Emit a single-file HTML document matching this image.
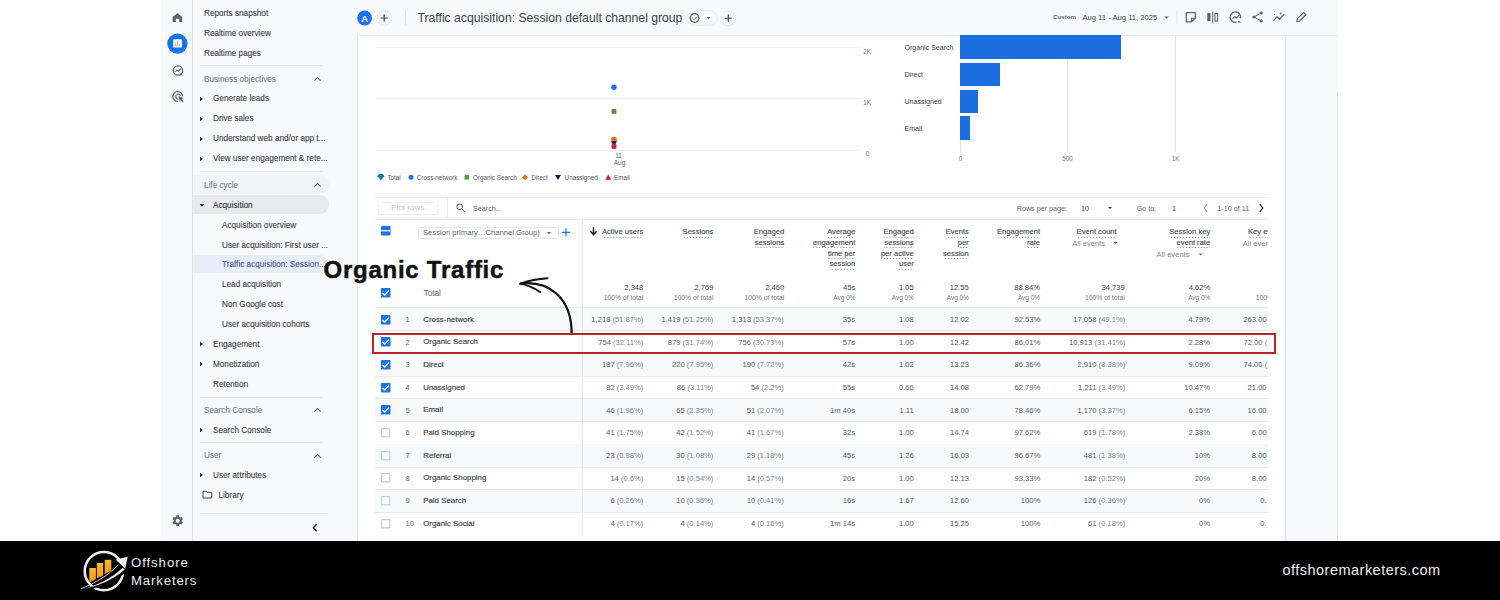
<!DOCTYPE html>
<html><head><meta charset="utf-8">
<style>
*{margin:0;padding:0;box-sizing:border-box}
html,body{width:1500px;height:600px;overflow:hidden;background:#fff;font-family:"Liberation Sans",sans-serif;color:#3c4043}
.t{position:absolute;white-space:nowrap;line-height:1}
.r{position:absolute}
.n{position:absolute;white-space:nowrap;line-height:1;-webkit-text-stroke:0.1px currentColor}
svg{position:absolute;overflow:visible}
</style></head><body>

<div class="r" style="left:161.00px;top:0.00px;width:1177.00px;height:541.00px;background:#f8f9fb"></div>
<div class="r" style="left:192.00px;top:0.00px;width:1.00px;height:541.00px;background:#dfe1e5"></div>
<div class="r" style="left:357.00px;top:35.00px;width:928.50px;height:506.00px;background:#fff;border-left:1px solid #e8e9eb;border-right:1px solid #e6e7e9"></div>
<div class="r" style="left:357.00px;top:34.50px;width:981.00px;height:1.00px;background:#e6e8eb"></div>
<div class="r" style="left:1337.00px;top:92.00px;width:1.00px;height:449.00px;background:#e3e5e8"></div>
<svg style="left:162px;top:0" width="31" height="110" viewBox="0 0 31 110">
<path d="M10.6 22 V17 L15.5 13.2 L20.2 17 V22 H17.2 V18.8 H13.8 V22 Z" fill="#5f6368"/>
<circle cx="15.4" cy="43.6" r="10.2" fill="#1a73e8"/>
<rect x="11.2" y="39.3" width="8.8" height="8.2" fill="#fff" rx="0.6"/>
<path d="M13.3 46 V42.5 M15.5 46 V41 M17.7 46 V43.5" stroke="#8ab4f8" stroke-width="0.9"/>
<circle cx="16" cy="70.5" r="4.6" fill="none" stroke="#5f6368" stroke-width="1.4"/>
<path d="M13.3 72 L15 70 L16.5 71.2 L18.8 68.6" fill="none" stroke="#5f6368" stroke-width="1.1"/>
<path d="M19.5 73.5 L21 75.3 L17.8 75.3 Z" fill="#5f6368"/>
<path d="M20.6 96.6 A4.9 4.9 0 1 0 16.2 101.4" fill="none" stroke="#5f6368" stroke-width="1.3"/>
<path d="M18.4 95.8 A2.4 2.4 0 1 0 15.9 99" fill="none" stroke="#5f6368" stroke-width="1.2"/>
<path d="M16.4 95.9 L21.8 98.2 L19.6 99 L21.8 101.4 L20.8 102.2 L18.7 99.9 L17.9 102 Z" fill="#5f6368"/>
</svg>
<svg style="left:171.3px;top:513.6px" width="13.4" height="13.4" viewBox="0 0 24 24"><path fill="#5f6368" d="M19.14 12.94c.04-.3.06-.61.06-.94 0-.32-.02-.64-.07-.94l2.03-1.58a.49.49 0 0 0 .12-.61l-1.92-3.32a.488.488 0 0 0-.59-.22l-2.39.96c-.5-.38-1.03-.7-1.62-.94l-.36-2.54a.484.484 0 0 0-.48-.41h-3.84c-.24 0-.43.17-.47.41l-.36 2.54c-.59.24-1.13.57-1.62.94l-2.39-.96c-.22-.08-.47 0-.59.22L2.74 8.87c-.12.21-.08.47.12.61l2.03 1.58c-.05.3-.09.63-.09.94s.02.64.07.94l-2.03 1.58a.49.49 0 0 0-.12.61l1.92 3.32c.12.22.37.29.59.22l2.39-.96c.5.38 1.03.7 1.62.94l.36 2.54c.05.24.24.41.48.41h3.84c.24 0 .44-.17.47-.41l.36-2.54c.59-.24 1.13-.56 1.62-.94l2.39.96c.22.08.47 0 .59-.22l1.92-3.32c.12-.22.07-.47-.12-.61l-2.01-1.58zM12 15.6c-1.98 0-3.6-1.62-3.6-3.6s1.62-3.6 3.6-3.6 3.6 1.62 3.6 3.6-1.62 3.6-3.6 3.6z"/></svg>
<div class="n" style="left:204.00px;top:10.16px;font-size:8.2px;color:#3c4043;">Reports snapshot</div>
<div class="n" style="left:204.00px;top:30.16px;font-size:8.2px;color:#3c4043;">Realtime overview</div>
<div class="n" style="left:204.00px;top:50.16px;font-size:8.2px;color:#3c4043;">Realtime pages</div>
<div class="r" style="left:200.00px;top:65.10px;width:123.00px;height:1.00px;background:#e4e6e9"></div>
<div class="n" style="left:204.00px;top:76.16px;font-size:8.2px;color:#777c82;">Business objectives</div>
<svg style="left:313px;top:76px" width="9" height="6" viewBox="0 0 9 6"><path d="M1.3 4.6 L4.5 1.6 L7.7 4.6" fill="none" stroke="#5f6368" stroke-width="1.3"/></svg>
<svg style="left:199px;top:96px" width="5" height="6" viewBox="0 0 5 6"><path d="M1 0.7 L3.8 3 L1 5.3 Z" fill="#202124"/></svg>
<div class="n" style="left:213.00px;top:95.06px;font-size:8.2px;color:#3c4043;">Generate leads</div>
<svg style="left:199px;top:116px" width="5" height="6" viewBox="0 0 5 6"><path d="M1 0.7 L3.8 3 L1 5.3 Z" fill="#202124"/></svg>
<div class="n" style="left:213.00px;top:115.06px;font-size:8.2px;color:#3c4043;">Drive sales</div>
<svg style="left:199px;top:136px" width="5" height="6" viewBox="0 0 5 6"><path d="M1 0.7 L3.8 3 L1 5.3 Z" fill="#202124"/></svg>
<div class="n" style="left:213.00px;top:135.06px;font-size:8.2px;color:#3c4043;">Understand web and/or app t...</div>
<svg style="left:199px;top:156px" width="5" height="6" viewBox="0 0 5 6"><path d="M1 0.7 L3.8 3 L1 5.3 Z" fill="#202124"/></svg>
<div class="n" style="left:213.00px;top:155.06px;font-size:8.2px;color:#3c4043;">View user engagement &amp; rete...</div>
<div class="r" style="left:200.00px;top:171.20px;width:123.00px;height:1.00px;background:#e4e6e9"></div>
<div class="r" style="left:193.00px;top:174.60px;width:136.00px;height:19.60px;background:#f2f3f5;border-radius:0 10px 10px 0"></div>
<div class="n" style="left:204.00px;top:182.16px;font-size:8.2px;color:#777c82;">Life cycle</div>
<svg style="left:313px;top:182px" width="9" height="6" viewBox="0 0 9 6"><path d="M1.3 4.6 L4.5 1.6 L7.7 4.6" fill="none" stroke="#5f6368" stroke-width="1.3"/></svg>
<div class="r" style="left:193.00px;top:195.40px;width:136.00px;height:18.30px;background:#e8eaed;border-radius:0 9px 9px 0"></div>
<svg style="left:198.5px;top:202.5px" width="6" height="5" viewBox="0 0 6 5"><path d="M0.7 1 L3 3.8 L5.3 1 Z" fill="#202124"/></svg>
<div class="n" style="left:213.00px;top:201.66px;font-size:8.2px;color:#303438;">Acquisition</div>
<div class="n" style="left:222.00px;top:221.66px;font-size:8.2px;color:#3c4043;">Acquisition overview</div>
<div class="n" style="left:222.00px;top:241.66px;font-size:8.2px;color:#3c4043;">User acquisition: First user ...</div>
<div class="r" style="left:193.00px;top:255.20px;width:135.00px;height:17.60px;background:#e7edf9;border-radius:0 9px 9px 0"></div>
<div class="n" style="left:222.00px;top:261.16px;font-size:8.2px;color:#41599a;">Traffic acquisition: Session...</div>
<div class="n" style="left:222.00px;top:281.16px;font-size:8.2px;color:#3c4043;">Lead acquisition</div>
<div class="n" style="left:222.00px;top:301.16px;font-size:8.2px;color:#3c4043;">Non Google cost</div>
<div class="n" style="left:222.00px;top:321.16px;font-size:8.2px;color:#3c4043;">User acquisition cohorts</div>
<svg style="left:199px;top:341px" width="5" height="6" viewBox="0 0 5 6"><path d="M1 0.7 L3.8 3 L1 5.3 Z" fill="#202124"/></svg>
<div class="n" style="left:213.00px;top:341.16px;font-size:8.2px;color:#3c4043;">Engagement</div>
<svg style="left:199px;top:361px" width="5" height="6" viewBox="0 0 5 6"><path d="M1 0.7 L3.8 3 L1 5.3 Z" fill="#202124"/></svg>
<div class="n" style="left:213.00px;top:361.16px;font-size:8.2px;color:#3c4043;">Monetization</div>
<div class="n" style="left:213.00px;top:381.16px;font-size:8.2px;color:#3c4043;">Retention</div>
<div class="r" style="left:200.00px;top:396.50px;width:123.00px;height:1.00px;background:#e4e6e9"></div>
<div class="n" style="left:204.00px;top:406.66px;font-size:8.2px;color:#777c82;">Search Console</div>
<svg style="left:313px;top:407px" width="9" height="6" viewBox="0 0 9 6"><path d="M1.3 4.6 L4.5 1.6 L7.7 4.6" fill="none" stroke="#5f6368" stroke-width="1.3"/></svg>
<svg style="left:199px;top:427px" width="5" height="6" viewBox="0 0 5 6"><path d="M1 0.7 L3.8 3 L1 5.3 Z" fill="#202124"/></svg>
<div class="n" style="left:213.00px;top:427.16px;font-size:8.2px;color:#3c4043;">Search Console</div>
<div class="r" style="left:200.00px;top:442.10px;width:123.00px;height:1.00px;background:#e4e6e9"></div>
<div class="n" style="left:204.00px;top:452.16px;font-size:8.2px;color:#777c82;">User</div>
<svg style="left:313px;top:453px" width="9" height="6" viewBox="0 0 9 6"><path d="M1.3 4.6 L4.5 1.6 L7.7 4.6" fill="none" stroke="#5f6368" stroke-width="1.3"/></svg>
<svg style="left:199px;top:472px" width="5" height="6" viewBox="0 0 5 6"><path d="M1 0.7 L3.8 3 L1 5.3 Z" fill="#202124"/></svg>
<div class="n" style="left:213.00px;top:472.16px;font-size:8.2px;color:#3c4043;">User attributes</div>
<svg style="left:202px;top:490px" width="11" height="9" viewBox="0 0 11 9"><path d="M1 1.3 H4.3 L5.3 2.4 H9.7 V8 H1 Z" fill="none" stroke="#3c4043" stroke-width="1"/></svg>
<div class="n" style="left:218.50px;top:491.66px;font-size:8.2px;color:#3c4043;">Library</div>
<div class="r" style="left:200.00px;top:512.50px;width:128.00px;height:1.00px;background:#e4e6e9"></div>
<svg style="left:311px;top:523px" width="8" height="10" viewBox="0 0 8 10"><path d="M5.6 1.3 L2.4 4.8 L5.6 8.3" fill="none" stroke="#202124" stroke-width="1.4"/></svg>
<svg style="left:355px;top:8px" width="380" height="22" viewBox="355 8 380 22">
<circle cx="364.6" cy="18" r="7.4" fill="#1a73e8"/>
<circle cx="384.2" cy="18" r="7.3" fill="none" stroke="#c6c9cc" stroke-width="0.8" stroke-dasharray="1.2 1"/>
<path d="M384.2 14.3 V21.7 M380.5 18 H387.9" stroke="#3c4043" stroke-width="1.1"/>
<rect x="405" y="10" width="0.9" height="15" fill="#dfe1e5"/>
<rect x="687" y="10.6" width="30" height="14.6" rx="7.3" fill="none" stroke="#e6e8eb" stroke-width="0.8"/>
<circle cx="694.6" cy="18" r="4.3" fill="none" stroke="#3f5f48" stroke-width="1.2"/>
<path d="M692.5 18.2 L694.1 19.7 L696.8 16.6" fill="none" stroke="#2f7a3f" stroke-width="1"/>
<path d="M706.6 16.9 L710.8 16.9 L708.7 19.1 Z" fill="#5f6368"/>
<circle cx="728.3" cy="18.3" r="7.3" fill="none" stroke="#c6c9cc" stroke-width="0.8" stroke-dasharray="1.2 1"/>
<path d="M728.3 14.6 V22 M724.6 18.3 H732" stroke="#3c4043" stroke-width="1.1"/>
</svg>
<div class="t" style="left:164.70px;width:400px;text-align:center;top:13.64px;font-size:9.4px;color:#fff;font-weight:700;">A</div>
<div class="t" style="left:417.50px;top:11.87px;font-size:12.2px;color:#3c4043;">Traffic acquisition: Session default channel group</div>
<div class="t" style="left:1053.00px;top:14.25px;font-size:6.2px;color:#5f6368;font-weight:700;">Custom</div>
<div class="t" style="left:1082.40px;top:13.52px;font-size:7.65px;color:#3c4043;">Aug 11 - Aug 11, 2025</div>
<svg style="left:1160px;top:8px" width="160" height="20" viewBox="1160 8 160 20">
<path d="M1164.4 16.6 L1168.6 16.6 L1166.5 18.7 Z" fill="#5f6368"/>
<rect x="1176.5" y="11" width="0.9" height="13" fill="#dfe1e5"/>
<path d="M1186.3 12.6 H1195.3 V18.2 L1191.4 21.9 H1186.3 Z" fill="none" stroke="#5f6368" stroke-width="1.3" stroke-linejoin="round"/>
<path d="M1195.3 18.2 H1191.4 V21.9" fill="none" stroke="#5f6368" stroke-width="1.1"/>
<rect x="1207.3" y="13" width="3.2" height="8.2" fill="#5f6368"/>
<rect x="1212.2" y="11.6" width="1" height="11" fill="#5f6368"/>
<rect x="1214.9" y="13.4" width="2.7" height="7.6" fill="none" stroke="#5f6368" stroke-width="1.1"/>
<path d="M1240.4 18.4 A5.2 5.2 0 1 0 1236.5 22.2" fill="none" stroke="#5f6368" stroke-width="1.4"/>
<path d="M1232.4 18.8 L1234.6 16.6 L1236.4 18 L1238.9 15.3" fill="none" stroke="#5f6368" stroke-width="1.1"/>
<path d="M1238.6 20.6 L1241.5 22.6 L1237.6 22.6 Z" fill="#5f6368"/>
<circle cx="1261.2" cy="13" r="1.6" fill="#5f6368"/>
<circle cx="1253.9" cy="17" r="1.6" fill="#5f6368"/>
<circle cx="1261.2" cy="20.9" r="1.6" fill="#5f6368"/>
<path d="M1261.2 13 L1253.9 17 L1261.2 20.9" fill="none" stroke="#5f6368" stroke-width="1"/>
<path d="M1273.6 20.6 L1277 16.6 L1279.6 19.3 L1284.3 14.4" fill="none" stroke="#5f6368" stroke-width="1.3"/>
<circle cx="1274.6" cy="14.6" r="0.6" fill="#5f6368"/>
<path d="M1280.6 12.2 V14.4 M1279.5 13.3 H1281.7" stroke="#5f6368" stroke-width="0.6"/>
<path d="M1296.8 21.3 L1297.3 18.6 L1303.8 12.6 L1306 14.8 L1299.6 21 Z" fill="none" stroke="#5f6368" stroke-width="1.2" stroke-linejoin="round"/>
</svg>
<div class="r" style="left:376.30px;top:46.80px;width:484.00px;height:1.00px;background:#f0f1f3"></div>
<div class="r" style="left:376.30px;top:98.30px;width:484.00px;height:1.00px;background:#f0f1f3"></div>
<div class="r" style="left:376.30px;top:149.50px;width:484.00px;height:1.00px;background:#f0f1f3"></div>
<div class="t" style="left:667.00px;width:400px;text-align:center;top:49.17px;font-size:6.3px;color:#70757a;">2K</div>
<div class="t" style="left:667.00px;width:400px;text-align:center;top:100.17px;font-size:6.3px;color:#70757a;">1K</div>
<div class="t" style="left:667.50px;width:400px;text-align:center;top:151.17px;font-size:6.3px;color:#70757a;">0</div>
<div class="t" style="left:418.50px;width:400px;text-align:center;top:153.00px;font-size:6.5px;color:#5f6368;">11</div>
<div class="t" style="left:419.50px;width:400px;text-align:center;top:159.50px;font-size:6.5px;color:#5f6368;">Aug</div>
<svg style="left:600px;top:80px" width="30" height="75" viewBox="600 80 30 75">
<circle cx="614" cy="87.3" r="2.7" fill="#1a73e8"/>
<rect x="611.6" y="109" width="4.8" height="4.8" fill="#5a8f3c"/>
<circle cx="614" cy="139.6" r="2.9" fill="#e8710a"/>
<path d="M611 141.2 L617 141.2 L614 146.6 Z" fill="#0d1a6e"/>
<path d="M611.3 148.8 L616.7 148.8 L614 143.4 Z" fill="#d81b9c"/>
<rect x="611.4" y="143.5" width="5.2" height="5" rx="2.2" fill="#c2185b" opacity="0.9"/>
</svg>
<svg style="left:375px;top:170px" width="260" height="14" viewBox="375 170 260 14">
<path d="M377.6 176.3 A3.3 2.6 0 0 1 384.2 176.3 L380.9 180.6 Z" fill="#12829b"/>
<circle cx="411" cy="177.2" r="2.5" fill="#1a73e8"/>
<rect x="464.5" y="175" width="4.5" height="4.5" fill="#5c9a3a"/>
<path d="M525 174.2 L528 177.2 L525 180.2 L522 177.2 Z" fill="#e8710a"/>
<path d="M555 175 L561 175 L558 180 Z" fill="#0d1a6e"/>
<path d="M605.3 179.8 L611.3 179.8 L608.3 174.6 Z" fill="#c2185b"/>
</svg>
<div class="t" style="left:387.40px;top:174.67px;font-size:6.3px;color:#54595e;">Total</div>
<div class="t" style="left:416.80px;top:174.67px;font-size:6.3px;color:#54595e;">Cross-network</div>
<div class="t" style="left:472.90px;top:174.67px;font-size:6.3px;color:#54595e;">Organic Search</div>
<div class="t" style="left:531.30px;top:174.67px;font-size:6.3px;color:#54595e;">Direct</div>
<div class="t" style="left:564.60px;top:174.67px;font-size:6.3px;color:#54595e;">Unassigned</div>
<div class="t" style="left:614.00px;top:174.67px;font-size:6.3px;color:#54595e;">Email</div>
<div class="r" style="left:1067.20px;top:35.00px;width:1.00px;height:117.00px;background:#e3e5e8"></div>
<div class="r" style="left:1175.00px;top:35.00px;width:1.00px;height:117.00px;background:#e3e5e8"></div>
<div class="r" style="left:959.80px;top:140.00px;width:1.00px;height:12.00px;background:#e3e5e8"></div>
<div class="r" style="left:960.00px;top:35.10px;width:161.10px;height:23.60px;background:#1a6ee0"></div>
<div class="r" style="left:960.00px;top:62.70px;width:39.70px;height:23.30px;background:#1a6ee0"></div>
<div class="r" style="left:960.00px;top:89.50px;width:17.60px;height:23.40px;background:#1a6ee0"></div>
<div class="r" style="left:960.00px;top:116.40px;width:9.80px;height:23.30px;background:#1a6ee0"></div>
<div class="t" style="left:904.50px;top:44.03px;font-size:7.05px;color:#3c4043;">Organic Search</div>
<div class="t" style="left:904.50px;top:71.03px;font-size:7.05px;color:#3c4043;">Direct</div>
<div class="t" style="left:904.50px;top:97.83px;font-size:7.05px;color:#3c4043;">Unassigned</div>
<div class="t" style="left:904.50px;top:124.83px;font-size:7.05px;color:#3c4043;">Email</div>
<div class="t" style="left:760.40px;width:400px;text-align:center;top:156.17px;font-size:6.3px;color:#70757a;">0</div>
<div class="t" style="left:867.50px;width:400px;text-align:center;top:156.17px;font-size:6.3px;color:#70757a;">500</div>
<div class="t" style="left:975.50px;width:400px;text-align:center;top:156.17px;font-size:6.3px;color:#70757a;">1K</div>
<div class="r" style="left:374.50px;top:196.60px;width:893.50px;height:1.20px;background:#e8eaed"></div>
<div class="r" style="left:374.50px;top:218.50px;width:893.50px;height:1.00px;background:#e8eaed"></div>
<div class="r" style="left:378.00px;top:202.00px;width:60.00px;height:13.20px;border:1px solid #eceef0;border-radius:3px;background:#fff"></div>
<div class="t" style="left:207.80px;width:400px;text-align:center;top:204.44px;font-size:8.1px;color:#c4c7ca;">Plot rows</div>
<div class="r" style="left:447.00px;top:197.00px;width:1.00px;height:21.50px;background:#e8eaed"></div>
<svg style="left:455px;top:202px" width="12" height="12" viewBox="0 0 24 24"><path fill="#5f6368" d="M15.5 14h-.79l-.28-.27A6.47 6.47 0 0 0 16 9.5 6.5 6.5 0 1 0 9.5 16c1.61 0 3.09-.59 4.23-1.57l.27.28v.79l5 4.99L20.49 19l-4.99-5zm-6 0C7.01 14 5 11.99 5 9.5S7.01 5 9.5 5 14 7.01 14 9.5 11.99 14 9.5 14z"/></svg>
<div class="t" style="left:473.00px;top:204.91px;font-size:7.2px;color:#5f6368;">Search...</div>
<div class="t" style="left:1016.70px;top:204.71px;font-size:7.2px;color:#5f6368;">Rows per page:</div>
<div class="t" style="left:1081.00px;top:204.71px;font-size:7.2px;color:#3c4043;">10</div>
<div class="t" style="left:1136.70px;top:204.71px;font-size:7.2px;color:#5f6368;">Go to:</div>
<div class="t" style="left:1172.00px;top:204.71px;font-size:7.2px;color:#3c4043;">1</div>
<div class="t" style="left:1217.30px;top:204.71px;font-size:7.2px;color:#5f6368;">1-10 of 11</div>
<svg style="left:1100px;top:200px" width="170" height="16" viewBox="1100 200 170 16">
<path d="M1107.9 206.9 L1112.1 206.9 L1110 209.1 Z" fill="#3c4043"/>
<path d="M1207.3 204.2 L1204.3 208 L1207.3 211.8" fill="none" stroke="#9aa0a6" stroke-width="1.1"/>
<path d="M1259.8 204.2 L1262.8 208 L1259.8 211.8" fill="none" stroke="#202124" stroke-width="1.3"/>
</svg>
<svg style="left:380.8px;top:226.3px" width="9.5" height="9.5" viewBox="0 0 18 18"><rect x="0" y="0" width="18" height="18" rx="2" fill="#1a73e8"/><rect x="0" y="7.8" width="18" height="2.4" fill="#fff"/></svg>
<div class="r" style="left:418.40px;top:226.60px;width:140.60px;height:12.80px;border:1px solid #e3e5e8;border-radius:2px"></div>
<div class="t" style="left:423.00px;top:229.12px;font-size:7.65px;color:#5f6368;">Session primary…Channel Group)</div>
<svg style="left:540px;top:226px" width="35" height="14" viewBox="540 226 35 14">
<path d="M546.9 232 L551.1 232 L549 234.2 Z" fill="#5f6368"/>
<path d="M566 228.3 V236.3 M562 232.3 H570" stroke="#1a73e8" stroke-width="1.2"/>
</svg>
<svg style="left:589px;top:226px" width="10" height="11" viewBox="0 0 10 11"><path d="M4.5 1.2 V8 M1.4 5.2 L4.5 8.6 L7.6 5.2" fill="none" stroke="#202124" stroke-width="1.5"/></svg>
<div class="t" style="right:856.70px;top:227.77px;font-size:7.6px;color:#494d52;background-image:linear-gradient(to right,#8d9196 45%,transparent 45%);background-size:3px 1px;background-repeat:repeat-x;background-position:right bottom;padding-bottom:2.2px;line-height:1;-webkit-text-stroke:0.15px currentColor">Active users</div>
<div class="t" style="right:786.60px;top:227.77px;font-size:7.6px;color:#494d52;background-image:linear-gradient(to right,#8d9196 45%,transparent 45%);background-size:3px 1px;background-repeat:repeat-x;background-position:right bottom;padding-bottom:2.2px;line-height:1;-webkit-text-stroke:0.15px currentColor">Sessions</div>
<div class="t" style="right:715.80px;top:227.77px;font-size:7.6px;color:#494d52;background-image:linear-gradient(to right,#8d9196 45%,transparent 45%);background-size:3px 1px;background-repeat:repeat-x;background-position:right bottom;padding-bottom:2.2px;line-height:1;-webkit-text-stroke:0.15px currentColor">Engaged</div>
<div class="t" style="right:715.80px;top:238.67px;font-size:7.6px;color:#494d52;background-image:linear-gradient(to right,#8d9196 45%,transparent 45%);background-size:3px 1px;background-repeat:repeat-x;background-position:right bottom;padding-bottom:2.2px;line-height:1;-webkit-text-stroke:0.15px currentColor">sessions</div>
<div class="t" style="right:644.70px;top:227.77px;font-size:7.6px;color:#494d52;background-image:linear-gradient(to right,#8d9196 45%,transparent 45%);background-size:3px 1px;background-repeat:repeat-x;background-position:right bottom;padding-bottom:2.2px;line-height:1;-webkit-text-stroke:0.15px currentColor">Average</div>
<div class="t" style="right:644.70px;top:238.67px;font-size:7.6px;color:#494d52;background-image:linear-gradient(to right,#8d9196 45%,transparent 45%);background-size:3px 1px;background-repeat:repeat-x;background-position:right bottom;padding-bottom:2.2px;line-height:1;-webkit-text-stroke:0.15px currentColor">engagement</div>
<div class="t" style="right:644.70px;top:249.57px;font-size:7.6px;color:#494d52;background-image:linear-gradient(to right,#8d9196 45%,transparent 45%);background-size:3px 1px;background-repeat:repeat-x;background-position:right bottom;padding-bottom:2.2px;line-height:1;-webkit-text-stroke:0.15px currentColor">time per</div>
<div class="t" style="right:644.70px;top:260.47px;font-size:7.6px;color:#494d52;background-image:linear-gradient(to right,#8d9196 45%,transparent 45%);background-size:3px 1px;background-repeat:repeat-x;background-position:right bottom;padding-bottom:2.2px;line-height:1;-webkit-text-stroke:0.15px currentColor">session</div>
<div class="t" style="right:586.20px;top:227.77px;font-size:7.6px;color:#494d52;background-image:linear-gradient(to right,#8d9196 45%,transparent 45%);background-size:3px 1px;background-repeat:repeat-x;background-position:right bottom;padding-bottom:2.2px;line-height:1;-webkit-text-stroke:0.15px currentColor">Engaged</div>
<div class="t" style="right:586.20px;top:238.67px;font-size:7.6px;color:#494d52;background-image:linear-gradient(to right,#8d9196 45%,transparent 45%);background-size:3px 1px;background-repeat:repeat-x;background-position:right bottom;padding-bottom:2.2px;line-height:1;-webkit-text-stroke:0.15px currentColor">sessions</div>
<div class="t" style="right:586.20px;top:249.57px;font-size:7.6px;color:#494d52;background-image:linear-gradient(to right,#8d9196 45%,transparent 45%);background-size:3px 1px;background-repeat:repeat-x;background-position:right bottom;padding-bottom:2.2px;line-height:1;-webkit-text-stroke:0.15px currentColor">per active</div>
<div class="t" style="right:586.20px;top:260.47px;font-size:7.6px;color:#494d52;background-image:linear-gradient(to right,#8d9196 45%,transparent 45%);background-size:3px 1px;background-repeat:repeat-x;background-position:right bottom;padding-bottom:2.2px;line-height:1;-webkit-text-stroke:0.15px currentColor">user</div>
<div class="t" style="right:531.20px;top:227.77px;font-size:7.6px;color:#494d52;background-image:linear-gradient(to right,#8d9196 45%,transparent 45%);background-size:3px 1px;background-repeat:repeat-x;background-position:right bottom;padding-bottom:2.2px;line-height:1;-webkit-text-stroke:0.15px currentColor">Events</div>
<div class="t" style="right:531.20px;top:238.67px;font-size:7.6px;color:#494d52;background-image:linear-gradient(to right,#8d9196 45%,transparent 45%);background-size:3px 1px;background-repeat:repeat-x;background-position:right bottom;padding-bottom:2.2px;line-height:1;-webkit-text-stroke:0.15px currentColor">per</div>
<div class="t" style="right:531.20px;top:249.57px;font-size:7.6px;color:#494d52;background-image:linear-gradient(to right,#8d9196 45%,transparent 45%);background-size:3px 1px;background-repeat:repeat-x;background-position:right bottom;padding-bottom:2.2px;line-height:1;-webkit-text-stroke:0.15px currentColor">session</div>
<div class="t" style="right:460.00px;top:227.77px;font-size:7.6px;color:#494d52;background-image:linear-gradient(to right,#8d9196 45%,transparent 45%);background-size:3px 1px;background-repeat:repeat-x;background-position:right bottom;padding-bottom:2.2px;line-height:1;-webkit-text-stroke:0.15px currentColor">Engagement</div>
<div class="t" style="right:460.00px;top:238.67px;font-size:7.6px;color:#494d52;background-image:linear-gradient(to right,#8d9196 45%,transparent 45%);background-size:3px 1px;background-repeat:repeat-x;background-position:right bottom;padding-bottom:2.2px;line-height:1;-webkit-text-stroke:0.15px currentColor">rate</div>
<div class="t" style="right:383.30px;top:227.77px;font-size:7.6px;color:#494d52;background-image:linear-gradient(to right,#8d9196 45%,transparent 45%);background-size:3px 1px;background-repeat:repeat-x;background-position:right bottom;padding-bottom:2.2px;line-height:1;-webkit-text-stroke:0.15px currentColor">Event count</div>
<div class="t" style="left:1072.20px;top:239.57px;font-size:7.6px;color:#80868b;">All events</div>
<div class="t" style="right:289.80px;top:227.77px;font-size:7.6px;color:#494d52;background-image:linear-gradient(to right,#8d9196 45%,transparent 45%);background-size:3px 1px;background-repeat:repeat-x;background-position:right bottom;padding-bottom:2.2px;line-height:1;-webkit-text-stroke:0.15px currentColor">Session key</div>
<div class="t" style="right:289.80px;top:238.67px;font-size:7.6px;color:#494d52;background-image:linear-gradient(to right,#8d9196 45%,transparent 45%);background-size:3px 1px;background-repeat:repeat-x;background-position:right bottom;padding-bottom:2.2px;line-height:1;-webkit-text-stroke:0.15px currentColor">event rate</div>
<div class="t" style="left:1156.60px;top:250.77px;font-size:7.6px;color:#80868b;">All events</div>
<svg style="left:1100px;top:238px" width="110" height="22" viewBox="1100 238 110 22">
<path d="M1113.6 242.1 L1117.8 242.1 L1115.7 244.3 Z" fill="#5f6368"/>
<path d="M1198.6 253.4 L1202.8 253.4 L1200.7 255.6 Z" fill="#5f6368"/>
</svg>
<div style="position:absolute;left:1230px;top:219px;width:38px;height:316px;overflow:hidden">
<div class="t" style="left:18.00px;top:8.77px;font-size:7.6px;color:#494d52;background-image:linear-gradient(to right,#8d9196 45%,transparent 45%);background-size:3px 1px;background-repeat:repeat-x;background-position:right bottom;padding-bottom:2.2px;line-height:1;-webkit-text-stroke:0.15px currentColor">Key events</div>
<div class="t" style="left:12.80px;top:20.57px;font-size:7.6px;color:#80868b;">All events</div>
<div class="t" style="left:25.70px;top:76.14px;font-size:6.8px;color:#73777c;">100% of total</div>
</div>
<svg style="left:380.75px;top:288.25px" width="9.5" height="9.5" viewBox="0 0 18 18"><rect x="0" y="0" width="18" height="18" rx="1.2" fill="#1a73e8"/><path d="M2.8 9.4 L6.9 13.4 L15.2 5" fill="none" stroke="#fff" stroke-width="2.6"/></svg>
<div class="t" style="left:423.60px;top:289.66px;font-size:8.2px;color:#5f6368;">Total</div>
<div class="t" style="right:856.70px;top:283.77px;font-size:7.6px;color:#3c4043;">2,348</div>
<div class="t" style="right:856.70px;top:295.14px;font-size:6.8px;color:#73777c;">100% of total</div>
<div class="t" style="right:786.60px;top:283.77px;font-size:7.6px;color:#3c4043;">2,769</div>
<div class="t" style="right:786.60px;top:295.14px;font-size:6.8px;color:#73777c;">100% of total</div>
<div class="t" style="right:715.80px;top:283.77px;font-size:7.6px;color:#3c4043;">2,460</div>
<div class="t" style="right:715.80px;top:295.14px;font-size:6.8px;color:#73777c;">100% of total</div>
<div class="t" style="right:644.70px;top:283.77px;font-size:7.6px;color:#3c4043;">45s</div>
<div class="t" style="right:644.70px;top:295.44px;font-size:6.45px;color:#73777c;">Avg 0%</div>
<div class="t" style="right:586.20px;top:283.77px;font-size:7.6px;color:#3c4043;">1.05</div>
<div class="t" style="right:586.20px;top:295.44px;font-size:6.45px;color:#73777c;">Avg 0%</div>
<div class="t" style="right:531.20px;top:283.77px;font-size:7.6px;color:#3c4043;">12.55</div>
<div class="t" style="right:531.20px;top:295.44px;font-size:6.45px;color:#73777c;">Avg 0%</div>
<div class="t" style="right:460.00px;top:283.77px;font-size:7.6px;color:#3c4043;">88.84%</div>
<div class="t" style="right:460.00px;top:295.44px;font-size:6.45px;color:#73777c;">Avg 0%</div>
<div class="t" style="right:375.30px;top:283.77px;font-size:7.6px;color:#3c4043;">34,739</div>
<div class="t" style="right:375.30px;top:295.14px;font-size:6.8px;color:#73777c;">100% of total</div>
<div class="t" style="right:289.80px;top:283.77px;font-size:7.6px;color:#3c4043;">4.62%</div>
<div class="t" style="right:289.80px;top:295.44px;font-size:6.45px;color:#73777c;">Avg 0%</div>
<div class="r" style="left:374.50px;top:307.20px;width:893.50px;height:1.00px;background:#e8eaed"></div>
<div class="r" style="left:374.50px;top:307.80px;width:893.50px;height:22.77px;background:#f8f9fa"></div>
<div class="r" style="left:374.50px;top:330.07px;width:893.50px;height:1.00px;background:#e8eaed"></div>
<div class="r" style="left:374.50px;top:352.84px;width:893.50px;height:1.00px;background:#e8eaed"></div>
<div class="r" style="left:374.50px;top:353.34px;width:893.50px;height:22.77px;background:#f8f9fa"></div>
<div class="r" style="left:374.50px;top:375.61px;width:893.50px;height:1.00px;background:#e8eaed"></div>
<div class="r" style="left:374.50px;top:398.38px;width:893.50px;height:1.00px;background:#e8eaed"></div>
<div class="r" style="left:374.50px;top:398.88px;width:893.50px;height:22.77px;background:#f8f9fa"></div>
<div class="r" style="left:374.50px;top:421.15px;width:893.50px;height:1.00px;background:#e8eaed"></div>
<div class="r" style="left:374.50px;top:443.92px;width:893.50px;height:1.00px;background:#e8eaed"></div>
<div class="r" style="left:374.50px;top:444.42px;width:893.50px;height:22.77px;background:#f8f9fa"></div>
<div class="r" style="left:374.50px;top:466.69px;width:893.50px;height:1.00px;background:#e8eaed"></div>
<div class="r" style="left:374.50px;top:489.46px;width:893.50px;height:1.00px;background:#e8eaed"></div>
<div class="r" style="left:374.50px;top:489.96px;width:893.50px;height:22.77px;background:#f8f9fa"></div>
<div class="r" style="left:374.50px;top:512.23px;width:893.50px;height:1.00px;background:#e8eaed"></div>
<div class="r" style="left:582.00px;top:219.00px;width:1.00px;height:316.00px;background:#e8eaed"></div>
<svg style="left:380.55px;top:314.65px" width="9.5" height="9.5" viewBox="0 0 18 18"><rect x="0" y="0" width="18" height="18" rx="1.2" fill="#1a73e8"/><path d="M2.8 9.4 L6.9 13.4 L15.2 5" fill="none" stroke="#fff" stroke-width="2.6"/></svg>
<div class="t" style="left:405.60px;top:315.97px;font-size:7.6px;color:#5f6368;">1</div>
<div class="t" style="left:423.20px;top:315.71px;font-size:7.9px;color:#3c4043;-webkit-text-stroke:0.15px #3c4043">Cross-network</div>
<div class="t" style="right:856.70px;top:315.97px;font-size:7.6px;color:#54585d;">1,218 <span style="color:#7f8388">(51.87%)</span></div>
<div class="t" style="right:786.60px;top:315.97px;font-size:7.6px;color:#54585d;">1,419 <span style="color:#7f8388">(51.25%)</span></div>
<div class="t" style="right:716.20px;top:315.97px;font-size:7.6px;color:#54585d;">1,313 <span style="color:#7f8388">(53.37%)</span></div>
<div class="t" style="right:374.80px;top:315.97px;font-size:7.6px;color:#54585d;">17,058 <span style="color:#7f8388">(49.1%)</span></div>
<div class="t" style="right:645.00px;top:315.97px;font-size:7.6px;color:#55595e;">35s</div>
<div class="t" style="right:586.30px;top:315.97px;font-size:7.6px;color:#55595e;">1.08</div>
<div class="t" style="right:531.00px;top:315.97px;font-size:7.6px;color:#55595e;">12.02</div>
<div class="t" style="right:459.80px;top:315.97px;font-size:7.6px;color:#55595e;">92.53%</div>
<div class="t" style="right:290.00px;top:315.97px;font-size:7.6px;color:#55595e;">4.79%</div>
<svg style="left:380.55px;top:337.32px" width="9.5" height="9.5" viewBox="0 0 18 18"><rect x="0" y="0" width="18" height="18" rx="1.2" fill="#1a73e8"/><path d="M2.8 9.4 L6.9 13.4 L15.2 5" fill="none" stroke="#fff" stroke-width="2.6"/></svg>
<div class="t" style="left:405.60px;top:338.64px;font-size:7.6px;color:#5f6368;">2</div>
<div class="t" style="left:423.20px;top:338.38px;font-size:7.9px;color:#3c4043;-webkit-text-stroke:0.15px #3c4043">Organic Search</div>
<div class="t" style="right:856.70px;top:338.64px;font-size:7.6px;color:#54585d;">754 <span style="color:#7f8388">(32.11%)</span></div>
<div class="t" style="right:786.60px;top:338.64px;font-size:7.6px;color:#54585d;">879 <span style="color:#7f8388">(31.74%)</span></div>
<div class="t" style="right:716.20px;top:338.64px;font-size:7.6px;color:#54585d;">756 <span style="color:#7f8388">(30.73%)</span></div>
<div class="t" style="right:374.80px;top:338.64px;font-size:7.6px;color:#54585d;">10,913 <span style="color:#7f8388">(31.41%)</span></div>
<div class="t" style="right:645.00px;top:338.64px;font-size:7.6px;color:#55595e;">57s</div>
<div class="t" style="right:586.30px;top:338.64px;font-size:7.6px;color:#55595e;">1.00</div>
<div class="t" style="right:531.00px;top:338.64px;font-size:7.6px;color:#55595e;">12.42</div>
<div class="t" style="right:459.80px;top:338.64px;font-size:7.6px;color:#55595e;">86.01%</div>
<div class="t" style="right:290.00px;top:338.64px;font-size:7.6px;color:#55595e;">2.28%</div>
<svg style="left:380.55px;top:359.99px" width="9.5" height="9.5" viewBox="0 0 18 18"><rect x="0" y="0" width="18" height="18" rx="1.2" fill="#1a73e8"/><path d="M2.8 9.4 L6.9 13.4 L15.2 5" fill="none" stroke="#fff" stroke-width="2.6"/></svg>
<div class="t" style="left:405.60px;top:361.31px;font-size:7.6px;color:#5f6368;">3</div>
<div class="t" style="left:423.20px;top:361.05px;font-size:7.9px;color:#3c4043;-webkit-text-stroke:0.15px #3c4043">Direct</div>
<div class="t" style="right:856.70px;top:361.31px;font-size:7.6px;color:#54585d;">187 <span style="color:#7f8388">(7.96%)</span></div>
<div class="t" style="right:786.60px;top:361.31px;font-size:7.6px;color:#54585d;">220 <span style="color:#7f8388">(7.95%)</span></div>
<div class="t" style="right:716.20px;top:361.31px;font-size:7.6px;color:#54585d;">190 <span style="color:#7f8388">(7.72%)</span></div>
<div class="t" style="right:374.80px;top:361.31px;font-size:7.6px;color:#54585d;">2,910 <span style="color:#7f8388">(8.38%)</span></div>
<div class="t" style="right:645.00px;top:361.31px;font-size:7.6px;color:#55595e;">42s</div>
<div class="t" style="right:586.30px;top:361.31px;font-size:7.6px;color:#55595e;">1.02</div>
<div class="t" style="right:531.00px;top:361.31px;font-size:7.6px;color:#55595e;">13.23</div>
<div class="t" style="right:459.80px;top:361.31px;font-size:7.6px;color:#55595e;">86.36%</div>
<div class="t" style="right:290.00px;top:361.31px;font-size:7.6px;color:#55595e;">9.09%</div>
<svg style="left:380.55px;top:382.66px" width="9.5" height="9.5" viewBox="0 0 18 18"><rect x="0" y="0" width="18" height="18" rx="1.2" fill="#1a73e8"/><path d="M2.8 9.4 L6.9 13.4 L15.2 5" fill="none" stroke="#fff" stroke-width="2.6"/></svg>
<div class="t" style="left:405.60px;top:383.98px;font-size:7.6px;color:#5f6368;">4</div>
<div class="t" style="left:423.20px;top:383.72px;font-size:7.9px;color:#3c4043;-webkit-text-stroke:0.15px #3c4043">Unassigned</div>
<div class="t" style="right:856.70px;top:383.98px;font-size:7.6px;color:#54585d;">82 <span style="color:#7f8388">(3.49%)</span></div>
<div class="t" style="right:786.60px;top:383.98px;font-size:7.6px;color:#54585d;">86 <span style="color:#7f8388">(3.11%)</span></div>
<div class="t" style="right:716.20px;top:383.98px;font-size:7.6px;color:#54585d;">54 <span style="color:#7f8388">(2.2%)</span></div>
<div class="t" style="right:374.80px;top:383.98px;font-size:7.6px;color:#54585d;">1,211 <span style="color:#7f8388">(3.49%)</span></div>
<div class="t" style="right:645.00px;top:383.98px;font-size:7.6px;color:#55595e;">55s</div>
<div class="t" style="right:586.30px;top:383.98px;font-size:7.6px;color:#55595e;">0.66</div>
<div class="t" style="right:531.00px;top:383.98px;font-size:7.6px;color:#55595e;">14.08</div>
<div class="t" style="right:459.80px;top:383.98px;font-size:7.6px;color:#55595e;">62.79%</div>
<div class="t" style="right:290.00px;top:383.98px;font-size:7.6px;color:#55595e;">10.47%</div>
<svg style="left:380.55px;top:405.33px" width="9.5" height="9.5" viewBox="0 0 18 18"><rect x="0" y="0" width="18" height="18" rx="1.2" fill="#1a73e8"/><path d="M2.8 9.4 L6.9 13.4 L15.2 5" fill="none" stroke="#fff" stroke-width="2.6"/></svg>
<div class="t" style="left:405.60px;top:406.65px;font-size:7.6px;color:#5f6368;">5</div>
<div class="t" style="left:423.20px;top:406.39px;font-size:7.9px;color:#3c4043;-webkit-text-stroke:0.15px #3c4043">Email</div>
<div class="t" style="right:856.70px;top:406.65px;font-size:7.6px;color:#54585d;">46 <span style="color:#7f8388">(1.96%)</span></div>
<div class="t" style="right:786.60px;top:406.65px;font-size:7.6px;color:#54585d;">65 <span style="color:#7f8388">(2.35%)</span></div>
<div class="t" style="right:716.20px;top:406.65px;font-size:7.6px;color:#54585d;">51 <span style="color:#7f8388">(2.07%)</span></div>
<div class="t" style="right:374.80px;top:406.65px;font-size:7.6px;color:#54585d;">1,170 <span style="color:#7f8388">(3.37%)</span></div>
<div class="t" style="right:645.00px;top:406.65px;font-size:7.6px;color:#55595e;">1m 40s</div>
<div class="t" style="right:586.30px;top:406.65px;font-size:7.6px;color:#55595e;">1.11</div>
<div class="t" style="right:531.00px;top:406.65px;font-size:7.6px;color:#55595e;">18.00</div>
<div class="t" style="right:459.80px;top:406.65px;font-size:7.6px;color:#55595e;">78.46%</div>
<div class="t" style="right:290.00px;top:406.65px;font-size:7.6px;color:#55595e;">6.15%</div>
<svg style="left:380.55px;top:428.00px" width="9.5" height="9.5" viewBox="0 0 18 18"><rect x="1.2" y="1.2" width="15.6" height="15.6" rx="0.8" fill="#fff" stroke="#c8cbce" stroke-width="2.2"/></svg>
<div class="t" style="left:405.60px;top:429.32px;font-size:7.6px;color:#5f6368;">6</div>
<div class="t" style="left:423.20px;top:429.06px;font-size:7.9px;color:#3c4043;-webkit-text-stroke:0.15px #3c4043">Paid Shopping</div>
<div class="t" style="right:856.70px;top:429.32px;font-size:7.6px;color:#54585d;">41 <span style="color:#7f8388">(1.75%)</span></div>
<div class="t" style="right:786.60px;top:429.32px;font-size:7.6px;color:#54585d;">42 <span style="color:#7f8388">(1.52%)</span></div>
<div class="t" style="right:716.20px;top:429.32px;font-size:7.6px;color:#54585d;">41 <span style="color:#7f8388">(1.67%)</span></div>
<div class="t" style="right:374.80px;top:429.32px;font-size:7.6px;color:#54585d;">619 <span style="color:#7f8388">(1.78%)</span></div>
<div class="t" style="right:645.00px;top:429.32px;font-size:7.6px;color:#55595e;">32s</div>
<div class="t" style="right:586.30px;top:429.32px;font-size:7.6px;color:#55595e;">1.00</div>
<div class="t" style="right:531.00px;top:429.32px;font-size:7.6px;color:#55595e;">14.74</div>
<div class="t" style="right:459.80px;top:429.32px;font-size:7.6px;color:#55595e;">97.62%</div>
<div class="t" style="right:290.00px;top:429.32px;font-size:7.6px;color:#55595e;">2.38%</div>
<svg style="left:380.55px;top:450.67px" width="9.5" height="9.5" viewBox="0 0 18 18"><rect x="1.2" y="1.2" width="15.6" height="15.6" rx="0.8" fill="#fff" stroke="#c8cbce" stroke-width="2.2"/></svg>
<div class="t" style="left:405.60px;top:451.99px;font-size:7.6px;color:#5f6368;">7</div>
<div class="t" style="left:423.20px;top:451.73px;font-size:7.9px;color:#3c4043;-webkit-text-stroke:0.15px #3c4043">Referral</div>
<div class="t" style="right:856.70px;top:451.99px;font-size:7.6px;color:#54585d;">23 <span style="color:#7f8388">(0.98%)</span></div>
<div class="t" style="right:786.60px;top:451.99px;font-size:7.6px;color:#54585d;">30 <span style="color:#7f8388">(1.08%)</span></div>
<div class="t" style="right:716.20px;top:451.99px;font-size:7.6px;color:#54585d;">29 <span style="color:#7f8388">(1.18%)</span></div>
<div class="t" style="right:374.80px;top:451.99px;font-size:7.6px;color:#54585d;">481 <span style="color:#7f8388">(1.38%)</span></div>
<div class="t" style="right:645.00px;top:451.99px;font-size:7.6px;color:#55595e;">45s</div>
<div class="t" style="right:586.30px;top:451.99px;font-size:7.6px;color:#55595e;">1.26</div>
<div class="t" style="right:531.00px;top:451.99px;font-size:7.6px;color:#55595e;">16.03</div>
<div class="t" style="right:459.80px;top:451.99px;font-size:7.6px;color:#55595e;">96.67%</div>
<div class="t" style="right:290.00px;top:451.99px;font-size:7.6px;color:#55595e;">10%</div>
<svg style="left:380.55px;top:473.34px" width="9.5" height="9.5" viewBox="0 0 18 18"><rect x="1.2" y="1.2" width="15.6" height="15.6" rx="0.8" fill="#fff" stroke="#c8cbce" stroke-width="2.2"/></svg>
<div class="t" style="left:405.60px;top:474.66px;font-size:7.6px;color:#5f6368;">8</div>
<div class="t" style="left:423.20px;top:474.40px;font-size:7.9px;color:#3c4043;-webkit-text-stroke:0.15px #3c4043">Organic Shopping</div>
<div class="t" style="right:856.70px;top:474.66px;font-size:7.6px;color:#54585d;">14 <span style="color:#7f8388">(0.6%)</span></div>
<div class="t" style="right:786.60px;top:474.66px;font-size:7.6px;color:#54585d;">15 <span style="color:#7f8388">(0.54%)</span></div>
<div class="t" style="right:716.20px;top:474.66px;font-size:7.6px;color:#54585d;">14 <span style="color:#7f8388">(0.57%)</span></div>
<div class="t" style="right:374.80px;top:474.66px;font-size:7.6px;color:#54585d;">182 <span style="color:#7f8388">(0.52%)</span></div>
<div class="t" style="right:645.00px;top:474.66px;font-size:7.6px;color:#55595e;">20s</div>
<div class="t" style="right:586.30px;top:474.66px;font-size:7.6px;color:#55595e;">1.00</div>
<div class="t" style="right:531.00px;top:474.66px;font-size:7.6px;color:#55595e;">12.13</div>
<div class="t" style="right:459.80px;top:474.66px;font-size:7.6px;color:#55595e;">93.33%</div>
<div class="t" style="right:290.00px;top:474.66px;font-size:7.6px;color:#55595e;">20%</div>
<svg style="left:380.55px;top:496.01px" width="9.5" height="9.5" viewBox="0 0 18 18"><rect x="1.2" y="1.2" width="15.6" height="15.6" rx="0.8" fill="#fff" stroke="#c8cbce" stroke-width="2.2"/></svg>
<div class="t" style="left:405.60px;top:497.33px;font-size:7.6px;color:#5f6368;">9</div>
<div class="t" style="left:423.20px;top:497.07px;font-size:7.9px;color:#3c4043;-webkit-text-stroke:0.15px #3c4043">Paid Search</div>
<div class="t" style="right:856.70px;top:497.33px;font-size:7.6px;color:#54585d;">6 <span style="color:#7f8388">(0.26%)</span></div>
<div class="t" style="right:786.60px;top:497.33px;font-size:7.6px;color:#54585d;">10 <span style="color:#7f8388">(0.36%)</span></div>
<div class="t" style="right:716.20px;top:497.33px;font-size:7.6px;color:#54585d;">10 <span style="color:#7f8388">(0.41%)</span></div>
<div class="t" style="right:374.80px;top:497.33px;font-size:7.6px;color:#54585d;">126 <span style="color:#7f8388">(0.36%)</span></div>
<div class="t" style="right:645.00px;top:497.33px;font-size:7.6px;color:#55595e;">16s</div>
<div class="t" style="right:586.30px;top:497.33px;font-size:7.6px;color:#55595e;">1.67</div>
<div class="t" style="right:531.00px;top:497.33px;font-size:7.6px;color:#55595e;">12.60</div>
<div class="t" style="right:459.80px;top:497.33px;font-size:7.6px;color:#55595e;">100%</div>
<div class="t" style="right:290.00px;top:497.33px;font-size:7.6px;color:#55595e;">0%</div>
<svg style="left:380.55px;top:518.68px" width="9.5" height="9.5" viewBox="0 0 18 18"><rect x="1.2" y="1.2" width="15.6" height="15.6" rx="0.8" fill="#fff" stroke="#c8cbce" stroke-width="2.2"/></svg>
<div class="t" style="left:405.60px;top:520.00px;font-size:7.6px;color:#5f6368;">10</div>
<div class="t" style="left:423.20px;top:519.74px;font-size:7.9px;color:#3c4043;-webkit-text-stroke:0.15px #3c4043">Organic Social</div>
<div class="t" style="right:856.70px;top:520.00px;font-size:7.6px;color:#54585d;">4 <span style="color:#7f8388">(0.17%)</span></div>
<div class="t" style="right:786.60px;top:520.00px;font-size:7.6px;color:#54585d;">4 <span style="color:#7f8388">(0.14%)</span></div>
<div class="t" style="right:716.20px;top:520.00px;font-size:7.6px;color:#54585d;">4 <span style="color:#7f8388">(0.16%)</span></div>
<div class="t" style="right:374.80px;top:520.00px;font-size:7.6px;color:#54585d;">61 <span style="color:#7f8388">(0.18%)</span></div>
<div class="t" style="right:645.00px;top:520.00px;font-size:7.6px;color:#55595e;">1m 14s</div>
<div class="t" style="right:586.30px;top:520.00px;font-size:7.6px;color:#55595e;">1.00</div>
<div class="t" style="right:531.00px;top:520.00px;font-size:7.6px;color:#55595e;">15.25</div>
<div class="t" style="right:459.80px;top:520.00px;font-size:7.6px;color:#55595e;">100%</div>
<div class="t" style="right:290.00px;top:520.00px;font-size:7.6px;color:#55595e;">0%</div>
<div style="position:absolute;left:1230px;top:307px;width:37.5px;height:230px;overflow:hidden">
<div class="t" style="right:0.9px;top:8.97px;font-size:7.6px;color:#54585d">263.00</div>
<div class="t" style="right:0.3px;top:31.64px;font-size:7.6px;color:#54585d">72.00 <span style="color:#7f8388">(</span></div>
<div class="t" style="right:0.3px;top:54.31px;font-size:7.6px;color:#54585d">74.00 <span style="color:#7f8388">(</span></div>
<div class="t" style="right:0.9px;top:76.98px;font-size:7.6px;color:#54585d">21.00</div>
<div class="t" style="right:0.9px;top:99.65px;font-size:7.6px;color:#54585d">16.00</div>
<div class="t" style="right:0.9px;top:122.32px;font-size:7.6px;color:#54585d">6.00</div>
<div class="t" style="right:0.9px;top:144.99px;font-size:7.6px;color:#54585d">8.00</div>
<div class="t" style="right:0.9px;top:167.66px;font-size:7.6px;color:#54585d">8.00</div>
<div class="t" style="right:0.9px;top:190.33px;font-size:7.6px;color:#54585d">0.</div>
<div class="t" style="right:0.9px;top:213.00px;font-size:7.6px;color:#54585d">0.</div>
</div>
<div class="t" style="left:323.5px;top:257.8px;font-size:24px;font-weight:700;color:#111;letter-spacing:0.75px;line-height:1;-webkit-text-stroke:0.5px #111">Organic Traffic</div>
<svg style="left:510px;top:270px" width="70" height="70" viewBox="510 270 70 70">
<path d="M520.5 283.6 C548 280.5 572 297 571.6 334" fill="none" stroke="#111" stroke-width="2.3" stroke-linecap="round"/>
<path d="M520.3 283.6 C530 280.3 539 278.8 547.5 278.3" fill="none" stroke="#111" stroke-width="1.9" stroke-linecap="round"/>
<path d="M520.3 283.6 C528 285.2 535 288.5 540.5 292.3" fill="none" stroke="#111" stroke-width="1.9" stroke-linecap="round"/>
</svg>
<div class="r" style="left:371.60px;top:332.50px;width:904.20px;height:21.30px;border:2.5px solid #b8232b"></div>
<div class="r" style="left:0.00px;top:540.50px;width:1500.00px;height:59.50px;background:#000"></div>
<svg style="left:75px;top:545px" width="60" height="52" viewBox="75 545 60 52">
<defs><linearGradient id="og" x1="0" y1="0" x2="0" y2="1"><stop offset="0" stop-color="#f9b531"/><stop offset="1" stop-color="#f09a16"/></linearGradient></defs>
<circle cx="103.9" cy="571.1" r="19.2" fill="none" stroke="#f0f0f0" stroke-width="2.5"/>
<path d="M89.3 568 H95.9 V579.2 L89.3 582.3 Z" fill="url(#og)"/>
<path d="M96.8 563 H103.1 V575.4 L96.8 578.6 Z" fill="url(#og)"/>
<path d="M104.7 559.8 H111.3 V570.6 L104.7 574.3 Z" fill="url(#og)"/>
<path d="M78 593 C95 585 110 577 118 567 L121 556 L131 552 L131 569 C117 580 98 588 78 593 Z" fill="#000"/>
<path d="M81 588.8 C95 583 108 576 118.5 564.5" fill="none" stroke="#efefef" stroke-width="0.9"/>
<path d="M81 589.5 C98 585.5 112 578 122.6 567.8 L124.8 569.6 C113 580 98 586.5 81 589.5 Z" fill="#f0f0f0"/>
<path d="M127.8 556.8 L115.6 559.6 L125.2 568.8 Z" fill="#f0f0f0"/>
</svg>
<div class="t" style="left:131px;top:555.6px;font-size:13.2px;color:#ececec;letter-spacing:0.92px;line-height:1">Offshore</div>
<div class="t" style="left:131px;top:573.6px;font-size:13.2px;color:#ececec;letter-spacing:0.85px;line-height:1">Marketers</div>
<div class="t" style="left:1282.5px;top:562.5px;font-size:14.5px;color:#efefef;letter-spacing:0.48px;line-height:1">offshoremarketers.com</div>
</body></html>
